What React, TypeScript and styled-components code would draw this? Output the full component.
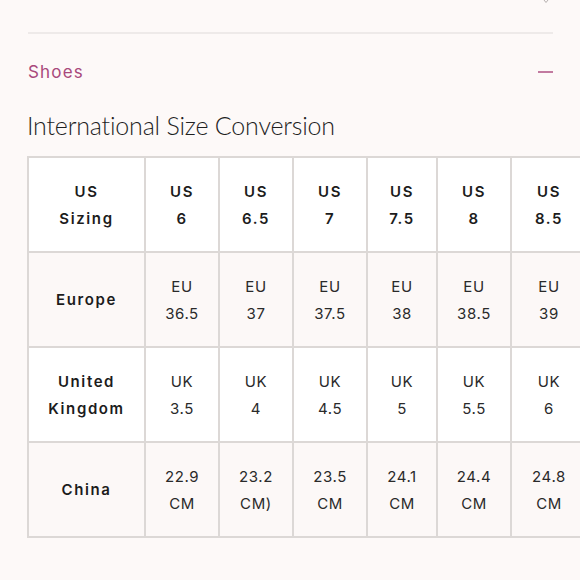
import React from "react";
import styled, { createGlobalStyle } from "styled-components";

const Global = createGlobalStyle`
  html, body {
    margin: 0;
    padding: 0;
    background: #fdf9f8;
    overflow: hidden;
  }
  body {
    font-family: "Inter", "Liberation Sans", sans-serif;
    color: #222;
  }
`;

const Page = styled.div`
  position: relative;
  width: 580px;
  height: 580px;
  padding: 32px 27px 0 27px;
  box-sizing: border-box;
  overflow: hidden;
`;

const TopChevronTip = styled.svg`
  position: absolute;
  top: 0;
  left: 543px;
`;

const Divider = styled.div`
  height: 2px;
  background: #eeeae9;
  margin-left: 1px;
`;

const AccordionHeader = styled.div`
  display: flex;
  align-items: center;
  justify-content: space-between;
  height: 76px;
  padding-left: 1px;
`;

const AccordionTitle = styled.span`
  font-family: "Inter", "Liberation Sans", sans-serif;
  font-size: 17px;
  letter-spacing: 1.2px;
  color: #a9497c;
`;

const Minus = styled.span`
  display: block;
  width: 15px;
  height: 2px;
  background: #c27aa0;
`;

const Heading = styled.h2`
  margin: 0;
  font-family: "Lato", "Liberation Sans", sans-serif;
  font-weight: 300;
  font-size: 25px;
  line-height: 30px;
  letter-spacing: -0.2px;
  color: #1f1f1f;
`;

const TableWrap = styled.div`
  margin-top: 16px;
  width: 560px;
`;

const Table = styled.table`
  border-collapse: collapse;
  table-layout: fixed;
  width: 559px;
`;

const Row = styled.tr<{ $tint: boolean }>`
  background: ${(p) => (p.$tint ? "#fcf8f7" : "#ffffff")};
  height: 95px;
`;

const Cell = styled.td<{ $bold?: boolean }>`
  border: 2px solid #dcd8d6;
  text-align: center;
  vertical-align: middle;
  padding: 0;
  font-family: "Inter", "Liberation Sans", sans-serif;
  font-size: 15px;
  line-height: 27px;
  font-weight: ${(p) => (p.$bold ? 600 : 400)};
  letter-spacing: ${(p) => (p.$bold ? "1.6px" : "0.6px")};
  color: ${(p) => (p.$bold ? "#1c1c1c" : "#2a2a2a")};
`;

const Line = styled.div``;

const widths = [117, 74, 74, 74, 70, 74, 76];

type RowData = { label: string[]; cells: string[][]; boldCells: boolean };

const rows: RowData[] = [
  {
    label: ["US", "Sizing"],
    cells: [["US", "6"], ["US", "6.5"], ["US", "7"], ["US", "7.5"], ["US", "8"], ["US", "8.5"]],
    boldCells: true,
  },
  {
    label: ["Europe"],
    cells: [["EU", "36.5"], ["EU", "37"], ["EU", "37.5"], ["EU", "38"], ["EU", "38.5"], ["EU", "39"]],
    boldCells: false,
  },
  {
    label: ["United", "Kingdom"],
    cells: [["UK", "3.5"], ["UK", "4"], ["UK", "4.5"], ["UK", "5"], ["UK", "5.5"], ["UK", "6"]],
    boldCells: false,
  },
  {
    label: ["China"],
    cells: [["22.9", "CM"], ["23.2", "CM)"], ["23.5", "CM"], ["24.1", "CM"], ["24.4", "CM"], ["24.8", "CM"]],
    boldCells: false,
  },
];

export default function App() {
  return (
    <>
      <Global />
      <Page>
        <TopChevronTip width="6" height="4" viewBox="0 0 6 4">
          <path d="M1 0 L3 2.5 L5 0" stroke="#b5b0ae" strokeWidth="1" fill="none" />
        </TopChevronTip>
        <Divider />
        <AccordionHeader>
          <AccordionTitle>Shoes</AccordionTitle>
          <Minus />
        </AccordionHeader>
        <Heading>International Size Conversion</Heading>
        <TableWrap>
          <Table>
            <colgroup>
              {widths.map((w, i) => (
                <col key={i} style={{ width: w }} />
              ))}
            </colgroup>
            <tbody>
              {rows.map((r, ri) => (
                <Row key={ri} $tint={ri % 2 === 1}>
                  <Cell $bold>
                    {r.label.map((l, i) => (
                      <Line key={i}>{l}</Line>
                    ))}
                  </Cell>
                  {r.cells.map((c, ci) => (
                    <Cell key={ci} $bold={r.boldCells}>
                      {c.map((l, i) => (
                        <Line key={i}>{l}</Line>
                      ))}
                    </Cell>
                  ))}
                </Row>
              ))}
            </tbody>
          </Table>
        </TableWrap>
      </Page>
    </>
  );
}
